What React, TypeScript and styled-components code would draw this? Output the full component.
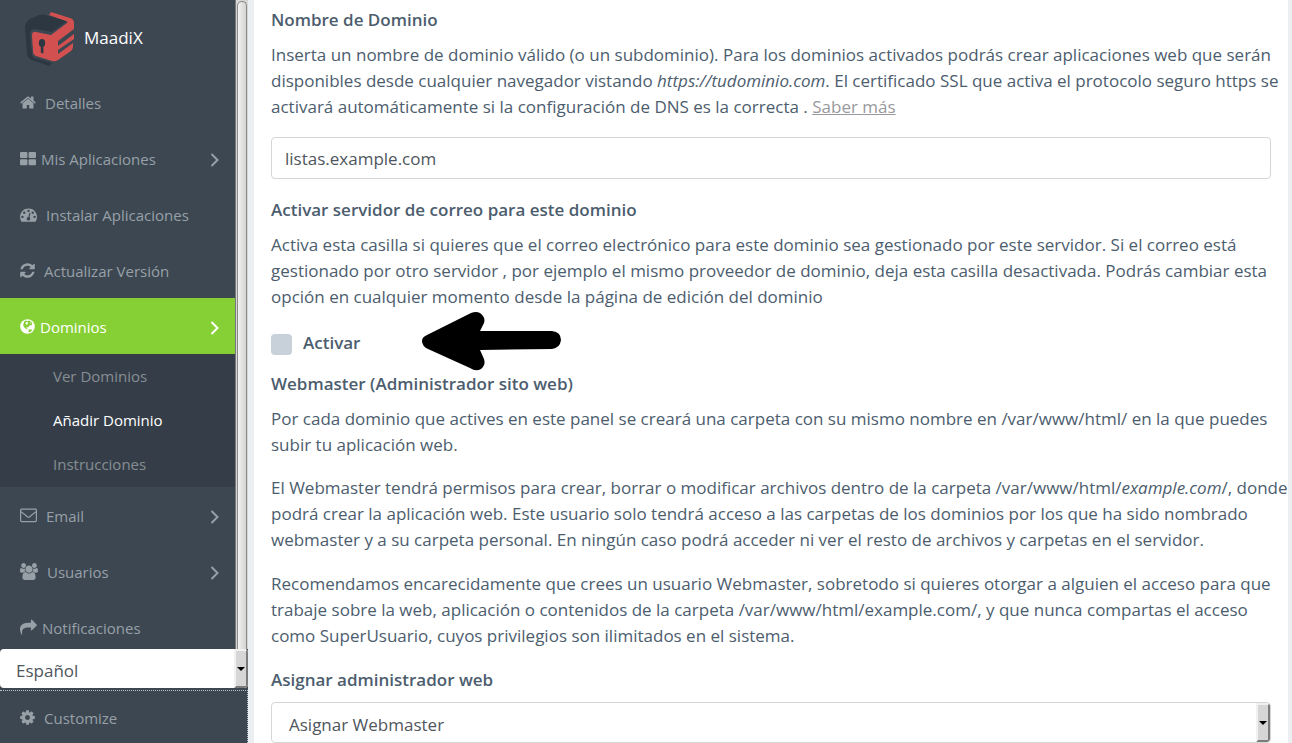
import React from "react";
import styled, { createGlobalStyle, css } from "styled-components";

const GlobalStyle = createGlobalStyle`
  *, *::before, *::after { box-sizing: border-box; }
  body {
    margin: 0;
    background: #ebeff2;
    color: #4c5d6e;
    font-family: "Open Sans", "Noto Sans", sans-serif;
    font-size: 17px;
    line-height: 26px;
  }
`;

const Page = styled.div`
  display: flex;
  height: 100vh;
  overflow: hidden;
`;

const Sidebar = styled.aside`
  display: flex;
  flex-direction: column;
  flex: 0 0 248px;
  height: 100%;
  background: #3c4752;
`;

const SidebarTop = styled.div`
  display: flex;
  flex: 1;
  min-height: 0;
`;

const NavColumn = styled.div`
  flex: 1;
  min-width: 0;
  overflow: hidden;
`;

const ScrollTrack = styled.div`
  flex: 0 0 13px;
  padding: 1px 1px 0;
  background: #d6d6d6;
  border-left: 1px solid #77797c;
`;

const ScrollThumb = styled.div`
  height: 100%;
  border: 1px solid #8b8a88;
  border-bottom: 0;
  border-radius: 6px 6px 0 0;
  background: linear-gradient(90deg, #f2f2f2, #d4d3d2);
`;

const Brand = styled.a`
  display: flex;
  align-items: center;
  gap: 8px;
  height: 74px;
  padding: 2px 24px 0;
  color: #fff;
  text-decoration: none;

  svg {
    flex: none;
    margin-top: 3px;
  }
`;

const linkBase = css`
  display: flex;
  align-items: center;
  font-size: 15px;
  line-height: 20px;
  text-decoration: none;
`;

const NavLink = styled.a<{ $active?: boolean; $tight?: boolean }>`
  ${linkBase}
  gap: ${(p) => (p.$tight ? 5 : 9)}px;
  height: 56px;
  padding: 1px 16px 0 20px;
  background: ${(p) => (p.$active ? "#86cf35" : "transparent")};
  color: ${(p) => (p.$active ? "#fff" : "#98a0a7")};

  svg {
    flex: none;
  }
`;

const NavLabel = styled.span`
  flex: 1;
`;

const SubMenu = styled.nav`
  padding-bottom: 1px;
  background: #353e48;
`;

const SubLink = styled.a<{ $current?: boolean }>`
  ${linkBase}
  height: 44px;
  padding-left: 53px;
  color: ${(p) => (p.$current ? "#fff" : "#868e94")};
`;

const SelectFrame = styled.div<{ $bordered?: boolean }>`
  display: flex;
  position: relative;
  height: ${(p) => (p.$bordered ? 41 : 39)}px;
  overflow: hidden;
  background: #fff;
  border: ${(p) => (p.$bordered ? "1px solid #d5d6d8" : "0")};
  border-radius: 4px;
`;

const Select = styled.select<{ $inset: number }>`
  flex: 1;
  appearance: none;
  border: 0;
  outline: 0;
  padding: 4px 20px 0 ${(p) => p.$inset}px;
  background: transparent;
  color: #4f565d;
  font: inherit;
`;

const SelectButton = styled.span`
  display: flex;
  align-items: center;
  justify-content: center;
  position: absolute;
  top: 0;
  right: 0;
  bottom: 0;
  width: 14px;
  background: #d6d6d6;
  border: 2px solid;
  border-color: #f1f1f1 #7b7b7b #7b7b7b #f1f1f1;
  border-radius: 0 3px 3px 0;
  pointer-events: none;

  &::after {
    content: "";
    border: 4px solid transparent;
    border-top-color: #000;
    border-bottom: 0;
  }
`;

const Customize = styled.div`
  display: flex;
  align-items: center;
  height: 53px;
  margin-top: 2px;
  border: 1px dotted #b9c0c6;
  border-left: 0;
  border-bottom: 0;
`;

const Content = styled.main`
  flex: 1;
  min-width: 0;
  height: 100%;
  overflow: hidden;
  margin: 0 4px 0 6px;
  padding: 7px 17px 0;
  background: #fff;
`;

const Field = styled.section`
  margin-bottom: 18px;
`;

const titleText = css`
  display: block;
  margin: 0 0 9px;
  font-size: 17px;
  font-weight: 600;
`;

const FieldLabel = styled.label`
  ${titleText}
`;

const FieldHeading = styled.h2`
  ${titleText}
`;

const Paragraph = styled.p<{ $loose?: boolean }>`
  margin: 0 -19px ${(p) => (p.$loose ? 18 : 17)}px 0;
`;

const MoreLink = styled.a`
  color: #98999c;
  text-decoration: underline;
`;

const TextInput = styled.input`
  display: block;
  width: 100%;
  height: 42px;
  padding: 0 13px;
  border: 1px solid #d5d6d8;
  border-radius: 4px;
  background: #fff;
  color: #4f565d;
  font: inherit;
`;

const CheckRow = styled.div`
  display: flex;
  align-items: center;
  margin: 20px 0 15px;
`;

const CheckBox = styled.input`
  appearance: none;
  width: 21px;
  height: 21px;
  margin: 2px 11px 0 0;
  border-radius: 4px;
  background: #c8d0da;
`;

const CheckLabel = styled.label`
  font-weight: 600;
`;

const Pointer = styled.svg`
  margin: -22px 0 -18px 62px;
`;

const FaGlyph = ({ d, width, left = 0, box = 1792 }: { d: string; width: number; left?: number; box?: number }) => (
  <svg width={width} height={17} viewBox={`${left} 0 ${box} 1792`} fill="currentColor" aria-hidden="true">
    <path d={d} />
  </svg>
);

const HOME =
  "M1472 992v480q0 26-19 45t-45 19h-384v-384h-256v384h-384q-26 0-45-19t-19-45v-480q0-1 .5-3t.5-3l575-474 575 474q1 2 1 6zm223-69l-62 74q-8 9-21 11h-3q-13 0-21-7l-692-577-692 577q-12 8-24 7-13-2-21-11l-62-74q-8-10-7-23.5t11-21.5l719-599q32-26 76-26t76 26l244 204v-195q0-14 9-23t23-9h192q14 0 23 9t9 23v408l219 182q10 8 11 21.5t-7 23.5z";
const GAUGE =
  "M384 1152q0-53-37.5-90.5t-90.5-37.5-90.5 37.5-37.5 90.5 37.5 90.5 90.5 37.5 90.5-37.5 37.5-90.5zm192-448q0-53-37.5-90.5t-90.5-37.5-90.5 37.5-37.5 90.5 37.5 90.5 90.5 37.5 90.5-37.5 37.5-90.5zm428 481l101-382q6-26-7.5-48.5t-38.5-29.5-48 6.5-30 39.5l-101 382q-60 5-107 43.5t-63 98.5q-20 77 20 146t117 89 146-20 89-117q16-60-6-117t-72-91zm660-33q0-53-37.5-90.5t-90.5-37.5-90.5 37.5-37.5 90.5 37.5 90.5 90.5 37.5 90.5-37.5 37.5-90.5zm-640-640q0-53-37.5-90.5t-90.5-37.5-90.5 37.5-37.5 90.5 37.5 90.5 90.5 37.5 90.5-37.5 37.5-90.5zm448 192q0-53-37.5-90.5t-90.5-37.5-90.5 37.5-37.5 90.5 37.5 90.5 90.5 37.5 90.5-37.5 37.5-90.5zm320 448q0 261-141 483-19 29-54 29h-1402q-35 0-54-29-141-221-141-483 0-182 71-348t191-286 286-191 348-71 348 71 286 191 191 286 71 348z";
const REFRESH =
  "M1639 1056q0 5-1 7-64 268-268 434.5t-478 166.5q-146 0-282.5-55t-243.5-157l-129 129q-19 19-45 19t-45-19-19-45v-448q0-26 19-45t45-19h448q26 0 45 19t19 45-19 45l-137 137q71 66 161 102t187 36q134 0 250-65t186-179q11-17 53-117 8-23 30-23h192q13 0 22.5 9.5t9.5 22.5zm25-800v448q0 26-19 45t-45 19h-448q-26 0-45-19t-19-45 19-45l138-138q-148-137-349-137-134 0-250 65t-186 179q-11 17-53 117-8 23-30 23h-199q-13 0-22.5-9.5t-9.5-22.5v-7q65-268 270-434.5t480-166.5q146 0 284 55.5t245 156.5l130-129q19-19 45-19t45 19 19 45z";
const COG =
  "M1152 896q0-106-75-181t-181-75-181 75-75 181 75 181 181 75 181-75 75-181zm512-109v222q0 12-8 23t-20 13l-185 28q-19 54-39 91 35 50 107 138 10 12 10 25t-9 23q-27 37-99 108t-94 71q-12 0-26-9l-138-108q-44 23-91 38-16 136-29 186-7 28-36 28h-222q-14 0-24.5-8.5t-11.5-21.5l-28-184q-49-16-90-37l-141 107q-10 9-25 9-14 0-25-11-126-114-165-168-7-10-7-23 0-12 8-23 15-21 51-66.5t54-70.5q-27-50-41-99l-183-27q-13-2-21-12.5t-8-23.5v-222q0-12 8-23t19-13l186-28q14-46 39-92-40-57-107-138-10-12-10-24 0-10 9-23 26-36 98.5-107.5t94.5-71.5q13 0 26 10l138 107q44-23 91-38 16-136 29-186 7-28 36-28h222q14 0 24.5 8.5t11.5 21.5l28 184q49 16 90 37l142-107q9-9 24-9 13 0 25 10 129 119 165 170 7 8 7 22 0 12-8 23-15 21-51 66.5t-54 70.5q26 50 41 98l183 28q13 2 21 12.5t8 23.5z";
const SHARE =
  "M1792 640q0 26-19 45l-512 512q-19 19-45 19t-45-19-19-45v-256h-224q-98 0-175.5 6t-154 21.5-133 42.5-105.5 69.5-80 101-48.5 138.5-17.5 181q0 55 5 123 0 6 2.5 23.5t2.5 26.5q0 15-8.5 25t-23.5 10q-16 0-28-17-7-9-13-22t-13.5-30-10.5-24q-127-285-127-451 0-199 53-333 162-403 875-403h224v-256q0-26 19-45t45-19 45 19l512 512q19 19 19 45z";
const USERS =
  "M593 896q-162 5-265 128h-134q-82 0-138-40.5t-56-118.5q0-353 124-353 6 0 43.5 21t97.5 42.5 119 21.5q67 0 133-23-5 37-5 66 0 139 81 256zm1071 637q0 120-73 189.5t-194 69.5h-874q-121 0-194-69.5t-73-189.5q0-53 3.5-103.5t14-109 26.5-108.5 43-97.5 62-81 85.5-53.5 111.5-20q10 0 43 21.5t73 48 107 48 135 21.5 135-21.5 107-48 73-48 43-21.5q61 0 111.5 20t85.5 53.5 62 81 43 97.5 26.5 108.5 14 109 3.5 103.5zm-1024-1277q0 106-75 181t-181 75-181-75-75-181 75-181 181-75 181 75 75 181zm704 384q0 159-112.5 271.5t-271.5 112.5-271.5-112.5-112.5-271.5 112.5-271.5 271.5-112.5 271.5 112.5 112.5 271.5zm576 225q0 78-56 118.5t-138 40.5h-134q-103-123-265-128 81-117 81-256 0-29-5-66 66 23 133 23 59 0 119-21.5t97.5-42.5 43.5-21q124 0 124 353zm-128-609q0 106-75 181t-181 75-181-75-75-181 75-181 181-75 181 75 75 181z";

const TilesIcon = () => (
  <svg width="16" height="16" viewBox="0 0 16 16" fill="currentColor" aria-hidden="true">
    <rect x="0" y="1" width="7.4" height="6" rx="1" />
    <rect x="8.6" y="1" width="7.4" height="6" rx="1" />
    <rect x="0" y="8.200" width="7.4" height="6" rx="1" />
    <rect x="8.6" y="8.200" width="7.4" height="6" rx="1" />
  </svg>
);

const GlobeIcon = () => (
  <svg width="15" height="16" viewBox="0 0 15 16" aria-hidden="true">
    <circle cx="7.5" cy="7.5" r="7.3" fill="currentColor" />
    <path
      d="M4.200 2.600 6 1.500l1.600.7 1.500-.6 2 1.200 1.300 2-.9 1.500-1.500-.1-1 1.100-.9 1.200-1.500-.2-.2.900 1.300.500-.1.900-1.500-.600-1.700-1.500-1.200-2 .2-1.600zM9 10.600l1.700-.3 1.500.700-1.300 1.500-2 .900-.500-1.100z"
      fill="#86cf35"
    />
    <path d="M6.400 3l1.800.5-.5 1.600-1.400.6-.9-1.100zM9.800 3.600l1.100.5-.8.800z" fill="currentColor" />
  </svg>
);

const EnvelopeIcon = () => (
  <svg width="17" height="16" viewBox="0 0 17 16" fill="none" stroke="currentColor" aria-hidden="true">
    <rect x=".6" y="1.200" width="15.800" height="12.400" rx="1" strokeWidth="1.200" />
    <path d="M1 3.800c2.500 1.800 4.700 3.500 6.300 5 .8.600 1.600.6 2.400 0C11.300 7.300 13.500 5.600 16 3.800" strokeWidth="1.200" />
  </svg>
);

const ChevronShape = styled.svg`
  margin-top: 3px;
`;

const Chevron = () => (
  <ChevronShape width="9" height="14" viewBox="0 0 9 14" fill="none" stroke="currentColor" strokeWidth="2" aria-hidden="true">
    <path d="M1.500 1l6 6-6 6" />
  </ChevronShape>
);

const Logo = () => (
  <svg width="52" height="56" viewBox="0 0 52 56" aria-hidden="true">
    <path d="M1 16 Q1 10 6 7 L15 3 Q18 2 21 3 L43 9 L28 20 L11 17 Q6 17 6 23 L8 42 Q8 45 11 46 L28 51 L25 54 L8 48 Q3 46 3 41 Z" fill="#2d3742" />
    <path d="M27 0 L46 6 Q50 7 50 11 V17 L34 29 V34 L50 22 V27 L34 38 V42 L49 31 V35 Q49 37 47 39 L34 48 Q31 50 28 49 L12 44 Q9 43 9 39 L8 24 Q8 19 12 20 L27 23 L43 11 Q44 9 42 9 L25 3 Z" fill="#d2504f" />
    <ellipse cx="18" cy="31" rx="3.200" ry="4" fill="#2d3742" />
    <path d="M16.800 33h2.600v8.500l-2.600-.8z" fill="#2d3742" />
  </svg>
);

const App = () => (
  <>
    <GlobalStyle />
    <Page>
      <Sidebar>
        <SidebarTop>
          <NavColumn>
            <Brand href="#">
              <Logo />
              MaadiX
            </Brand>
            <NavLink href="#"><FaGlyph d={HOME} width={16} left={64} box={1664} /><NavLabel>Detalles</NavLabel></NavLink>
            <NavLink href="#" $tight><TilesIcon /><NavLabel>Mis Aplicaciones</NavLabel><Chevron /></NavLink>
            <NavLink href="#"><FaGlyph d={GAUGE} width={17} /><NavLabel>Instalar Aplicaciones</NavLabel></NavLink>
            <NavLink href="#"><FaGlyph d={REFRESH} width={15} left={128} box={1536} /><NavLabel>Actualizar Versión</NavLabel></NavLink>
            <NavLink href="#" $tight $active><GlobeIcon /><NavLabel>Dominios</NavLabel><Chevron /></NavLink>
            <SubMenu>
              <SubLink href="#">Ver Dominios</SubLink>
              <SubLink href="#" $current>Añadir Dominio</SubLink>
              <SubLink href="#">Instrucciones</SubLink>
            </SubMenu>
            <NavLink href="#"><EnvelopeIcon /><NavLabel>Email</NavLabel><Chevron /></NavLink>
            <NavLink href="#"><FaGlyph d={USERS} width={18} box={1920} /><NavLabel>Usuarios</NavLabel><Chevron /></NavLink>
            <NavLink href="#" $tight><FaGlyph d={SHARE} width={17} /><NavLabel>Notificaciones</NavLabel></NavLink>
          </NavColumn>
          <ScrollTrack><ScrollThumb /></ScrollTrack>
        </SidebarTop>
        <SelectFrame>
          <Select $inset={16} aria-label="Idioma"><option>Español</option></Select>
          <SelectButton />
        </SelectFrame>
        <Customize>
          <NavLink href="#"><FaGlyph d={COG} width={15} left={128} box={1536} /><NavLabel>Customize</NavLabel></NavLink>
        </Customize>
      </Sidebar>

      <Content>
        <Field>
          <FieldLabel htmlFor="domain">Nombre de Dominio</FieldLabel>
          <Paragraph>
            Inserta un nombre de dominio válido (o un subdominio). Para los dominios activados podrás crear aplicaciones
            web que serán disponibles desde cualquier navegador vistando <em>https://tudominio.com</em>. El certificado
            SSL que activa el protocolo seguro https se activará automáticamente si la configuración de DNS es la
            correcta . <MoreLink href="#">Saber más</MoreLink>
          </Paragraph>
          <TextInput id="domain" type="text" defaultValue="listas.example.com" />
        </Field>

        <FieldLabel htmlFor="mail">Activar servidor de correo para este dominio</FieldLabel>
        <Paragraph>
          Activa esta casilla si quieres que el correo electrónico para este dominio sea gestionado por este servidor. Si
          el correo está gestionado por otro servidor , por ejemplo el mismo proveedor de dominio, deja esta casilla
          desactivada. Podrás cambiar esta opción en cualquier momento desde la página de edición del dominio
        </Paragraph>
        <CheckRow>
          <CheckBox id="mail" type="checkbox" />
          <CheckLabel htmlFor="mail">Activar</CheckLabel>
          <Pointer width="140" height="60" viewBox="0 0 140 60" aria-hidden="true">
            <path
              d="M5 24 L49 2 Q57 -1 61 5 Q64 9 61 14 L58 20 L130 20 Q139 21 139 29 Q138 37 130 38 L58 39 L62 48 Q64 54 59 58 Q54 61 48 57 L6 38 Q0 35 0 30 Q0 26 5 24 Z"
              fill="#000"
            />
          </Pointer>
        </CheckRow>

        <FieldHeading>Webmaster (Administrador sito web)</FieldHeading>
        <Paragraph>
          Por cada dominio que actives en este panel se creará una carpeta con su mismo nombre en /var/www/html/ en la
          que puedes subir tu aplicación web.
        </Paragraph>
        <Paragraph $loose>
          El Webmaster tendrá permisos para crear, borrar o modificar archivos dentro de la carpeta
          /var/www/html/<em>example.com</em>/, donde podrá crear la aplicación web. Este usuario solo tendrá acceso a las
          carpetas de los dominios por los que ha sido nombrado webmaster y a su carpeta personal. En ningún caso podrá
          acceder ni ver el resto de archivos y carpetas en el servidor.
        </Paragraph>
        <Paragraph $loose>
          Recomendamos encarecidamente que crees un usuario Webmaster, sobretodo si quieres otorgar a alguien el acceso
          para que trabaje sobre la web, aplicación o contenidos de la carpeta /var/www/html/example.com/, y que nunca
          compartas el acceso como SuperUsuario, cuyos privilegios son ilimitados en el sistema.
        </Paragraph>
        <FieldLabel htmlFor="admin">Asignar administrador web</FieldLabel>
        <SelectFrame $bordered>
          <Select $inset={17} id="admin"><option>Asignar Webmaster</option></Select>
          <SelectButton />
        </SelectFrame>
      </Content>
    </Page>
  </>
);

export default App;
